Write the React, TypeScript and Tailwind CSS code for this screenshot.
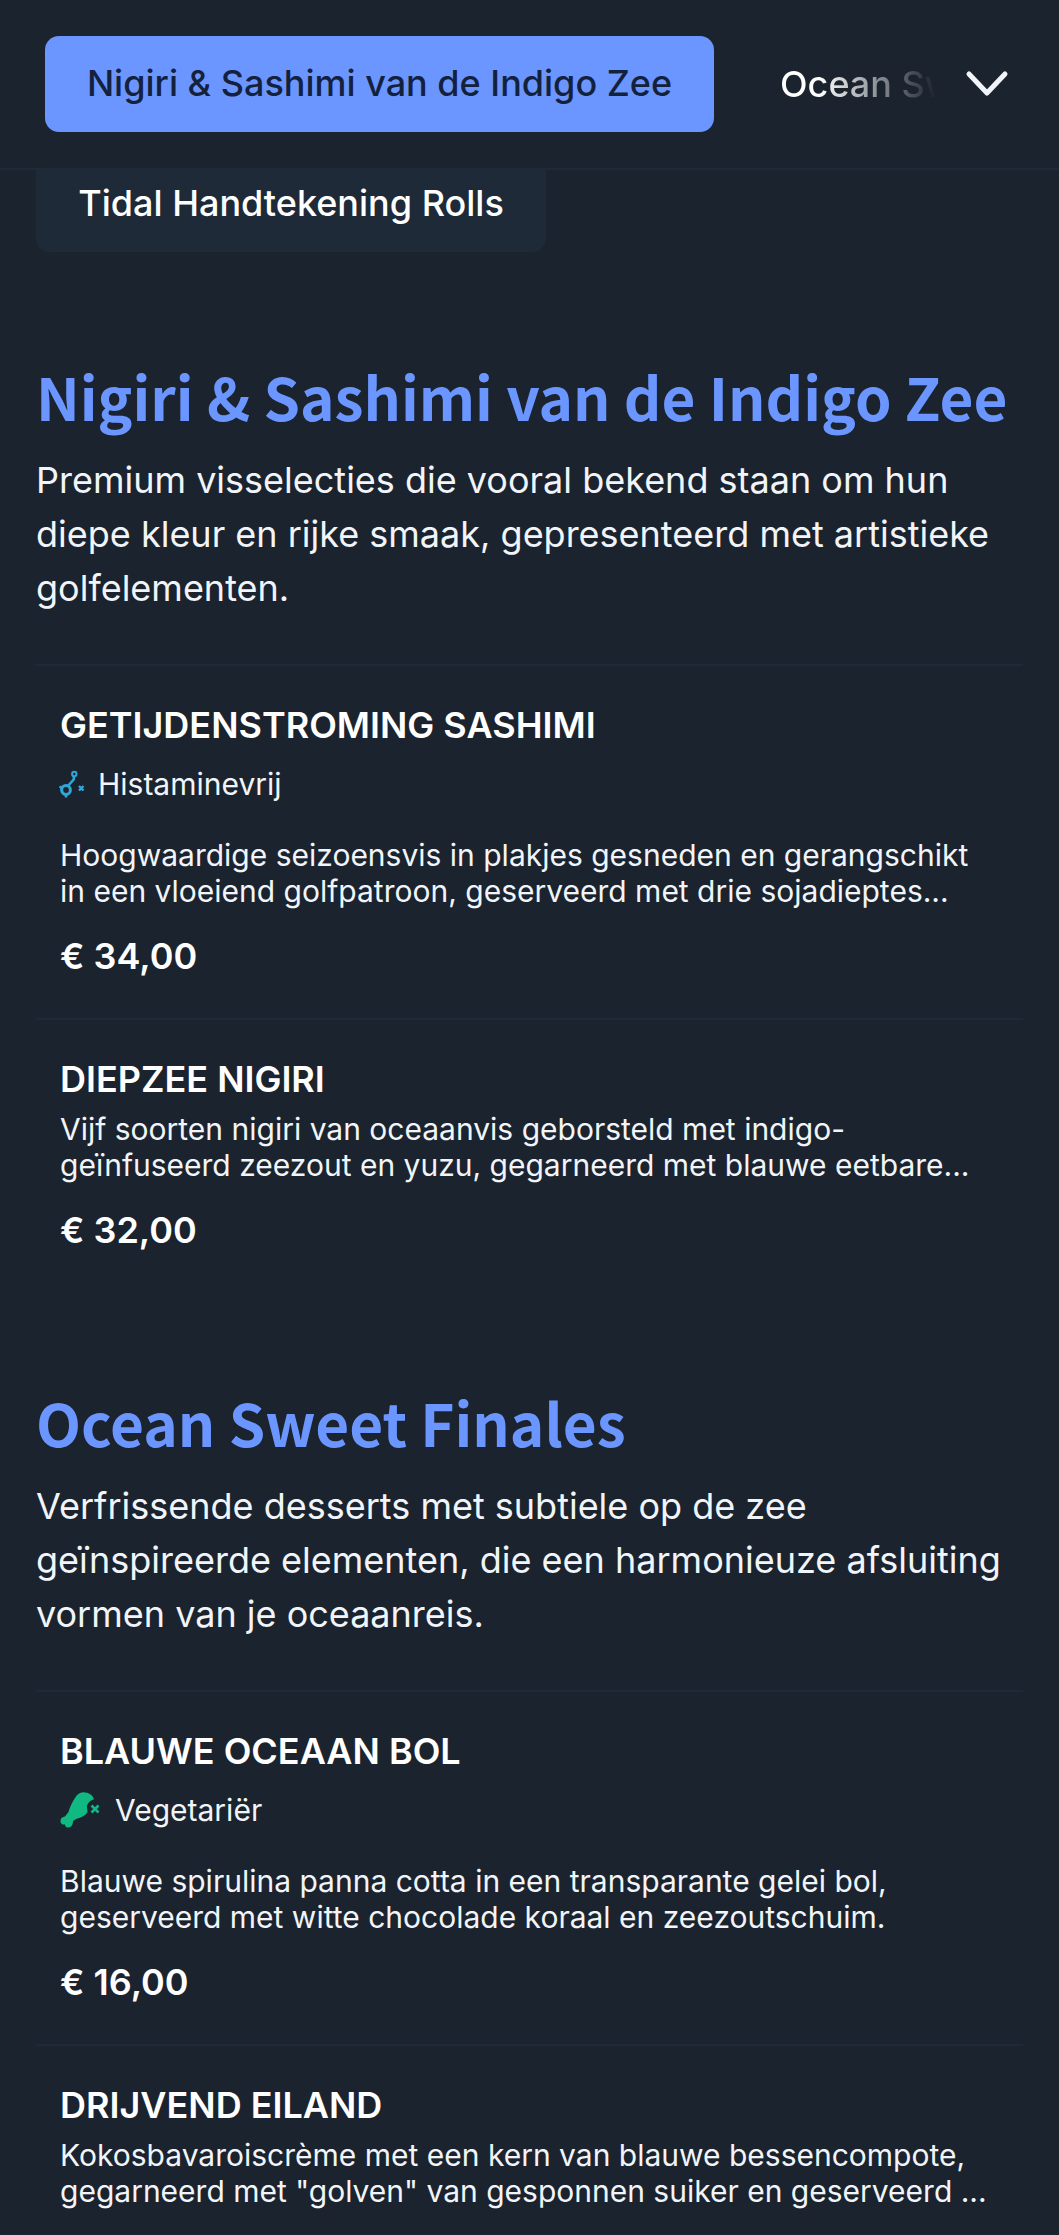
import React from "react";

const Allergen = ({ kind, label }: { kind: "hist" | "veg"; label: string }) => (
  <div className="flex items-center h-[30px] mt-[17px] mb-[38px]">
    {kind === "hist" ? (
      <svg width="28" height="28" viewBox="0 0 28 28" fill="none" className="mr-[12px] -ml-[2px] shrink-0">
        <circle cx="8" cy="20" r="4.4" stroke="#2ea8d8" strokeWidth="3" />
        <path d="M10.3 15.5 15.7 9.5 16 6" stroke="#2ea8d8" strokeWidth="2.6" />
        <circle cx="16.3" cy="4" r="2.2" stroke="#2ea8d8" strokeWidth="2" />
        <path d="M8 24.5V27.5M4 18 1.5 16.5" stroke="#2ea8d8" strokeWidth="2.6" />
        <path d="m21 16 4.5 4.5m0-4.5-4.5 4.5" stroke="#2ea8d8" strokeWidth="2.4" />
      </svg>
    ) : (
      <svg width="44" height="42" viewBox="0 0 44 42" fill="none" className="mr-[13px] -ml-[2px] shrink-0">
        <path d="M25 3.3C30 3 35 6 36 10.5C32 11 28.5 15 29 19C29.5 21 29.5 23 29.5 23C27 27 22 29 18 30L15 32C15 35 14 38 10.5 38.5C8 39 7 37 7 35.5C5 36 2.5 35 2.5 32C2.5 29 4.5 28 7 27.5L10.5 23C12 17 15 12 17 9C19 5.5 22 3.5 25 3.3Z" fill="#10b981" />
        <path d="m33.5 16.5 7 7m0-7-7 7" stroke="#10b981" strokeWidth="2.6" />
      </svg>
    )}
    <span className="text-[30px] leading-[30px] text-[#f1f5f9]">{label}</span>
  </div>
);

const Item = ({
  name, desc, price, allergen, last,
}: {
  name: string; desc: string[]; price?: string; allergen?: React.ReactNode; last?: boolean;
}) => (
  <div className={`border-t-2 border-[#1e2a38] px-[24px] pt-[32px] ${last ? "" : "pb-[40px]"}`}>
    <h3 className="text-[36px] leading-[54px] mb-[5px] font-semibold text-white uppercase">{name}</h3>
    {allergen}
    <p className="text-[30px] leading-[36px] text-[#f1f5f9]">
      {desc.map((d) => (
        <span key={d} className="block whitespace-nowrap">{d}</span>
      ))}
    </p>
    {price && <div className="mt-[25px] text-[36px] leading-[44px] font-semibold text-white">{price}</div>}
  </div>
);

const Section = ({ title, intro, children, mt }: { title: string; intro: string[]; children: React.ReactNode; mt: string }) => (
  <section className={mt}>
    <h2 className="text-[58.5px] leading-[72px] font-bold text-[#6b96ff] whitespace-nowrap font-['Noto_Sans_CJK_SC',sans-serif]">{title}</h2>
    <p className="mt-[21px] text-[36px] leading-[54px] text-[#f1f5f9]">
      {intro.map((d) => (
        <span key={d} className="block whitespace-nowrap">{d}</span>
      ))}
    </p>
    <div className="mt-[49px]">{children}</div>
  </section>
);

export default function App() {
  return (
    <div className="w-[1059px] h-[2235px] overflow-hidden bg-[#1b232e] font-['Inter',sans-serif]">
      <header className="h-[170px] border-b-2 border-[#1e2a38] flex items-center pl-[45px] pr-[50px]">
        <div className="h-[96px] w-[669px] shrink-0 rounded-[14px] bg-[#6b96ff] flex items-center justify-center text-[36px] font-medium text-[#14213d] whitespace-nowrap pb-[2px]">
          Nigiri &amp; Sashimi van de Indigo Zee
        </div>
        <div className="ml-[66px] w-[156px] overflow-hidden whitespace-nowrap text-[36px] font-medium bg-[linear-gradient(90deg,#ffffff_25%,#1b232e_100%)] bg-clip-text text-transparent">
          Ocean Sweet Finales
        </div>
        <svg width="44" height="44" viewBox="0 0 44 44" fill="none" className="ml-auto">
          <path d="M4 12 22 31 40 12" stroke="#f1f5f9" strokeWidth="5" strokeLinecap="round" strokeLinejoin="round" />
        </svg>
      </header>

      <main className="px-[36px]">
        <div className="h-[84px] w-[510px] rounded-b-[14px] bg-[#1e2a38] flex items-center justify-center text-[36px] font-medium text-white pb-[14px] -mt-[2px]">
          Tidal Handtekening Rolls
        </div>

        <Section
          mt="mt-[108px]"
          title="Nigiri & Sashimi van de Indigo Zee"
          intro={[
            "Premium visselecties die vooral bekend staan om hun",
            "diepe kleur en rijke smaak, gepresenteerd met artistieke",
            "golfelementen.",
          ]}
        >
          <Item
            name="Getijdenstroming Sashimi"
            allergen={<Allergen kind="hist" label="Histaminevrij" />}
            desc={[
              "Hoogwaardige seizoensvis in plakjes gesneden en gerangschikt",
              "in een vloeiend golfpatroon, geserveerd met drie sojadieptes...",
            ]}
            price="€ 34,00"
          />
          <Item
            name="Diepzee Nigiri"
            desc={[
              "Vijf soorten nigiri van oceaanvis geborsteld met indigo-",
              "geïnfuseerd zeezout en yuzu, gegarneerd met blauwe eetbare...",
            ]}
            price="€ 32,00"
          />
        </Section>

        <Section
          mt="mt-[94px]"
          title="Ocean Sweet Finales"
          intro={[
            "Verfrissende desserts met subtiele op de zee",
            "geïnspireerde elementen, die een harmonieuze afsluiting",
            "vormen van je oceaanreis.",
          ]}
        >
          <Item
            name="Blauwe Oceaan Bol"
            allergen={<Allergen kind="veg" label="Vegetariër" />}
            desc={[
              "Blauwe spirulina panna cotta in een transparante gelei bol,",
              "geserveerd met witte chocolade koraal en zeezoutschuim.",
            ]}
            price="€ 16,00"
          />
          <Item
            last
            name="Drijvend Eiland"
            desc={[
              "Kokosbavaroiscrème met een kern van blauwe bessencompote,",
              "gegarneerd met \"golven\" van gesponnen suiker en geserveerd ...",
            ]}
          />
        </Section>
      </main>
    </div>
  );
}
